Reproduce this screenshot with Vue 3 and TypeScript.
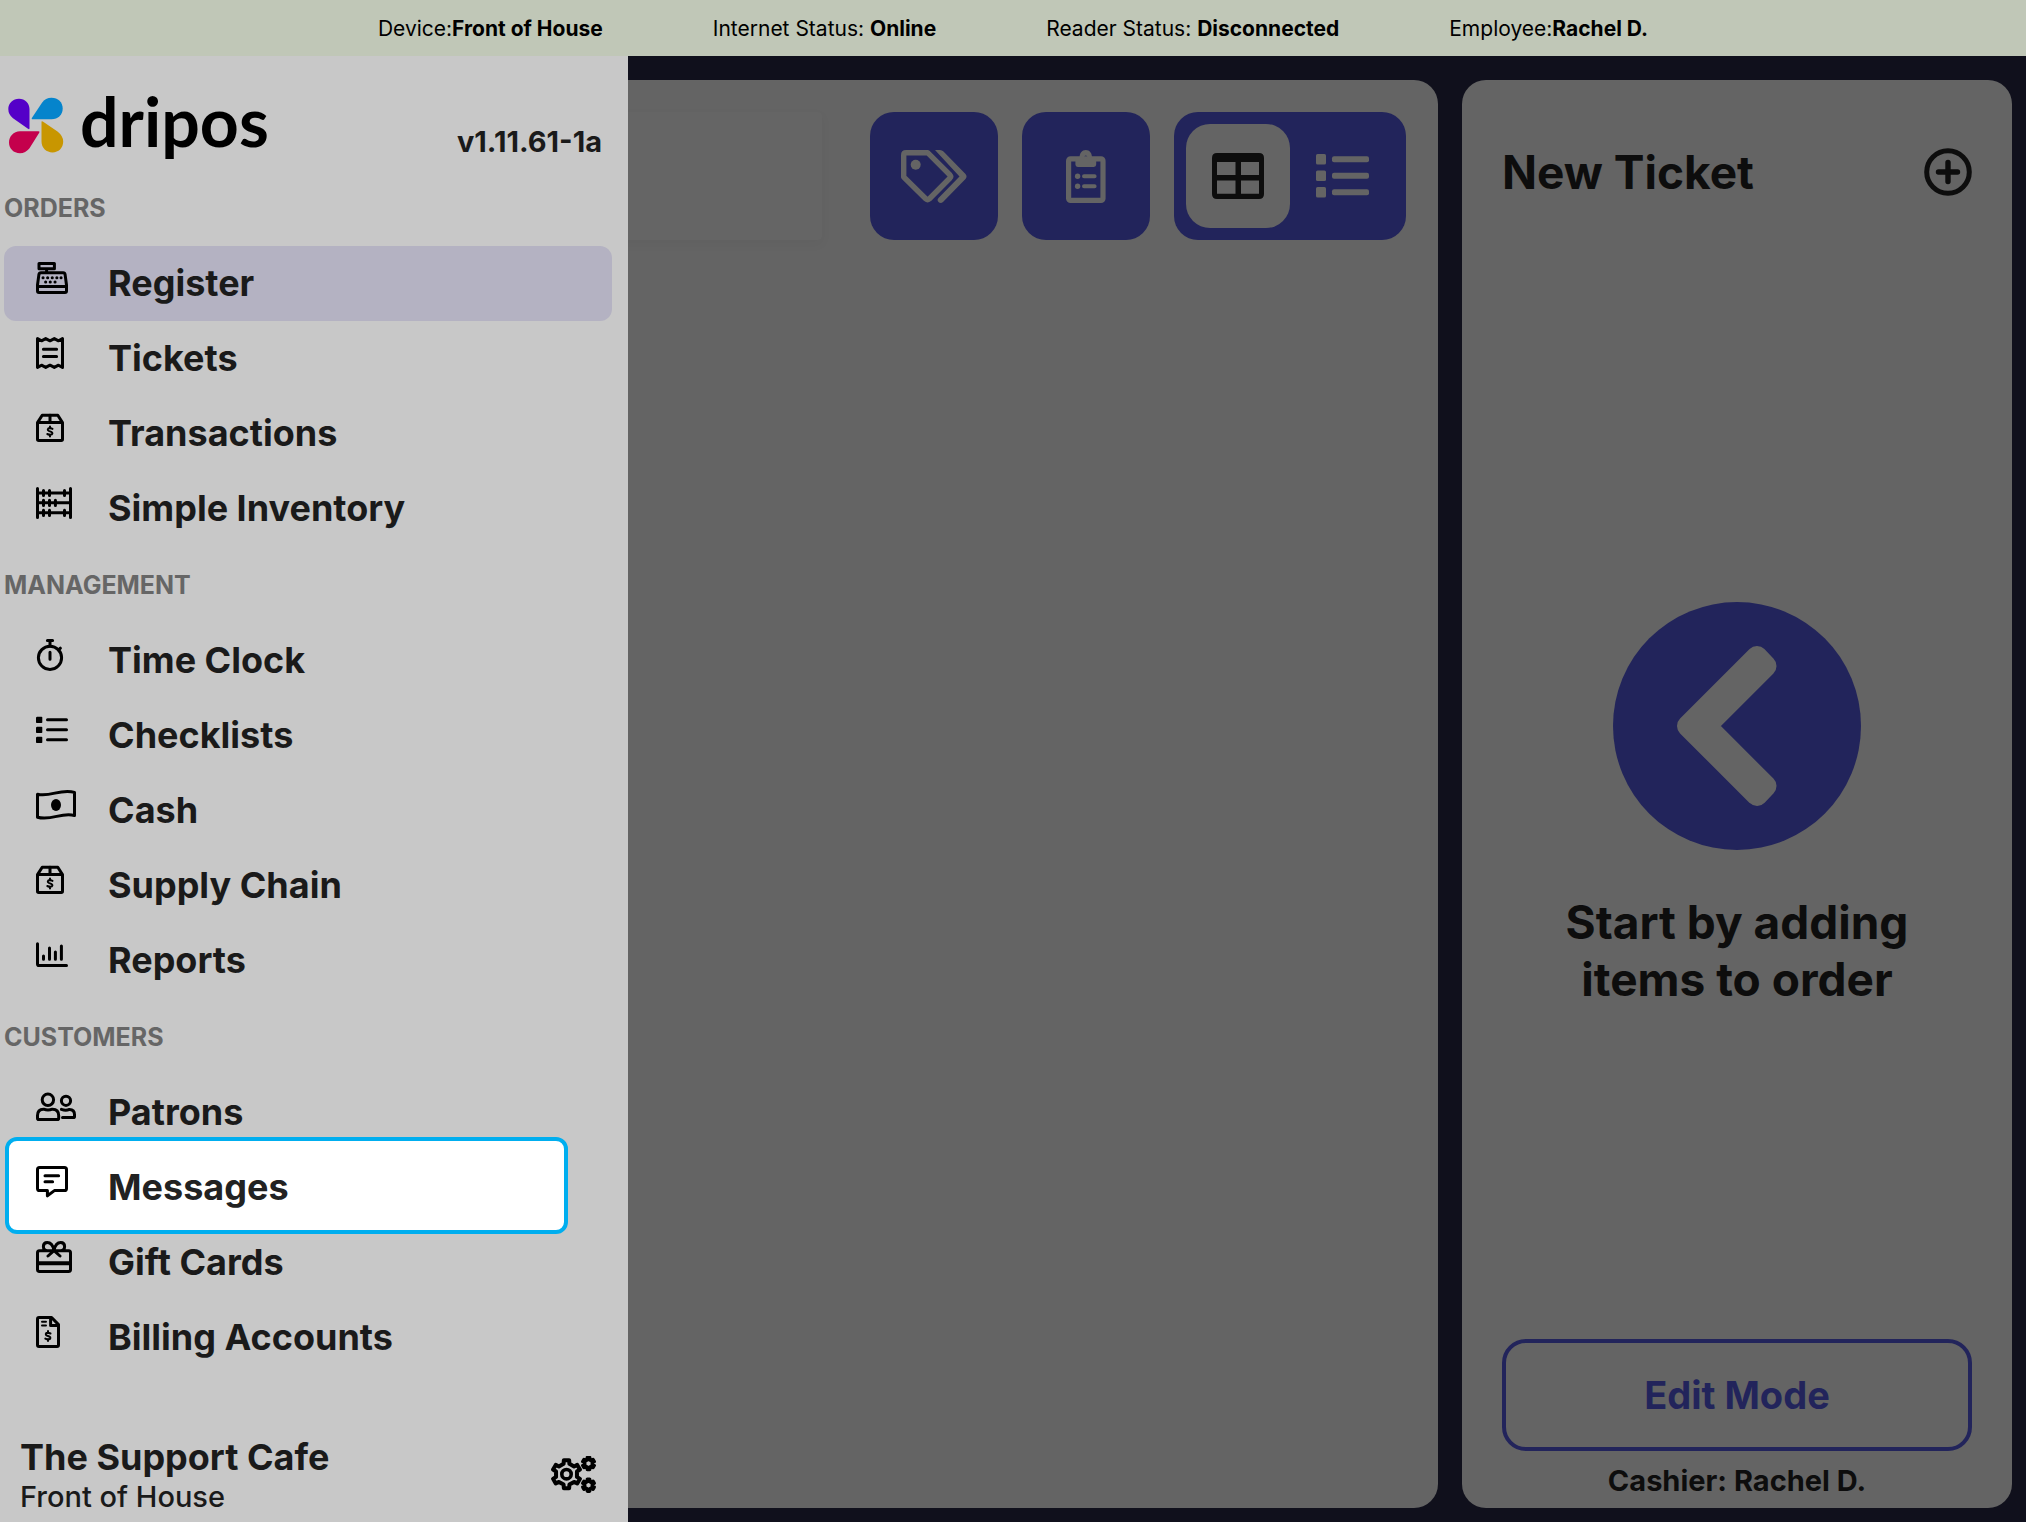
<script setup lang="ts">
import { ref } from 'vue'

interface Icon {
  width: number
  body: string
}

interface NavItem {
  label: string
  icon: string
}

interface NavSection {
  title: string
  items: NavItem[]
}

const dollar = (cx: number, cy: number): string =>
  `<path class="thin" d="M${cx + 2.5} ${cy - 2.5}Q${cx} ${cy - 3.8} ${cx - 1.6} ${cy - 3}Q${cx - 3.4} ${cy - 1} ${cx} ${cy}Q${cx + 3.6} ${cy + 1} ${cx + 1.8} ${cy + 3}Q${cx} ${cy + 3.9} ${cx - 2.7} ${cy + 2.6}M${cx} ${cy - 5}V${cy - 3}M${cx} ${cy + 3}V${cy + 5}"/>`

const icons: Record<string, Icon> = {
  register: {
    width: 32,
    body: '<path d="M3 1.5H18.4V6.8H3ZM10.6 7V10.5M5 10.8H27.2Q28.8 10.8 29.1 12.6L30.5 23V29Q30.5 30.5 29 30.5H3Q1.5 30.5 1.5 29V23L2.9 12.6Q3.2 10.8 5 10.8ZM1.5 24.4H30.5"/><path d="M7 15.8H7.1M11.6 15.8H11.7M16.2 15.8H16.3M20.8 15.8H20.9M25 15.8H25.1M9.6 20H9.7M14.2 20H14.3M19 20H19.1"/>',
  },
  receipt: {
    width: 28,
    body: '<path d="M1.5 1.6L5.5 3.8L9.7 1.6L14 3.8L18.3 1.6L22.5 3.8L26.5 1.6V30.4L22.5 28.2L18.3 30.4L14 28.2L9.7 30.4L5.5 28.2L1.5 30.4ZM7.4 12.3H20.6M7.4 19.5H20.6"/>',
  },
  box: {
    width: 28,
    body: `<path d="M6.2 3.3H21.8L26.5 10.6V27.3Q26.5 28.5 25.3 28.5H2.7Q1.5 28.5 1.5 27.3V10.6ZM1.5 10.4H26.5M14 3V10"/>${dollar(14, 19.4)}`,
  },
  abacus: {
    width: 36,
    body: '<path d="M1.5 1.5V30.5M34.5 1.5V30.5M1.5 6H34.5M1.5 15.8H34.5M1.5 25.8H34.5M7.5 3.4V8.6M13.5 3.4V8.6M28.5 3.4V8.6M7.5 13.2V18.4M13.5 13.2V18.4M19.4 13.2V18.4M7.5 23.2V28.4M13.5 23.2V28.4M28.5 23.2V28.4"/>',
  },
  stopwatch: {
    width: 28,
    body: '<circle cx="14" cy="18.8" r="11.6"/><path d="M11.4 1.6H16.6M14 2V7M14 13.2V20.3M22.5 11L24.4 9.2"/>',
  },
  list: {
    width: 32,
    body: '<path d="M11.5 5.8H30.5M11.5 15.8H30.5M11.5 25.8H30.5"/><path class="solid" d="M1 2.7H5.5Q6.3 2.7 6.3 3.5V8.2Q6.3 9 5.5 9H.8Q0 9 0 8.2V3.5ZM1 12.7H5.5Q6.3 12.7 6.3 13.5V18.2Q6.3 19 5.5 19H.8Q0 19 0 18.2V13.5ZM1 22.7H5.5Q6.3 22.7 6.3 23.5V28.2Q6.3 29 5.5 29H.8Q0 29 0 28.2V23.5Z"/>',
  },
  cash: {
    width: 40,
    body: '<path d="M1.5 5.2C14 8.6 25-1 38.5 3.4V26.6C26 22.8 15 32.2 1.5 28.2Z"/><ellipse class="solid" cx="20" cy="16" rx="5" ry="6"/>',
  },
  chart: {
    width: 32,
    body: '<path d="M1.5 4.8V25Q1.5 26.6 3 26.6H30.5M7.5 17V20.3M13.5 9V20.3M19.4 13V20.3M25.4 7V20.3"/>',
  },
  people: {
    width: 40,
    body: '<circle cx="11.9" cy="8.8" r="5.7"/><circle cx="30" cy="9.8" r="4.6"/><path d="M7.6 18.2Q12 20 16.4 18.2Q22.7 18.4 22.7 24.5V27.3Q22.7 28.6 21.4 28.6H2.8Q1.5 28.6 1.5 27.3V24.5Q1.5 18.4 7.6 18.2ZM25.4 18.4Q30 20 33.4 18.4Q38.5 18.6 38.5 23.4V25.4Q38.5 26.6 37.3 26.6H26.5"/>',
  },
  message: {
    width: 32,
    body: '<path d="M3.6 1.5H28.4Q30.5 1.5 30.5 3.6V22.4Q30.5 24.6 28.4 24.6H18.4L11.4 29.8V24.6H3.6Q1.5 24.6 1.5 22.4V3.6Q1.5 1.5 3.6 1.5ZM9 9.7H22.6M9 15.8H16.6"/>',
  },
  gift: {
    width: 36,
    body: '<path d="M3.4 9.7H32.6Q34.5 9.7 34.5 11.7V28.6Q34.5 30.5 32.6 30.5H3.4Q1.5 30.5 1.5 28.6V11.7Q1.5 9.7 3.4 9.7ZM18 9.4C17 4.4 14.6 1.5 11.3 1.5C8.8 1.5 7.4 3.2 7.4 5.5C7.4 8 9 9.7 11.5 9.7M18 9.4C19 4.4 21.4 1.5 24.7 1.5C27.2 1.5 28.6 3.2 28.6 5.5C28.6 8 27 9.7 24.5 9.7M12 15L18 9.7L24 15M2 21.7H34M2 22.7H34"/>',
  },
  invoice: {
    width: 24,
    body: `<path d="M3 1.5H15.6L22.5 8.6V29Q22.5 30.5 21 30.5H3Q1.5 30.5 1.5 29V3Q1.5 1.5 3 1.5ZM14.6 2V9.4H22"/><path class="thin" d="M6 5.8H10M6 9.6H10"/>${dollar(12, 20)}`,
  },
}

const sections: NavSection[] = [
  {
    title: 'ORDERS',
    items: [
      { label: 'Register', icon: 'register' },
      { label: 'Tickets', icon: 'receipt' },
      { label: 'Transactions', icon: 'box' },
      { label: 'Simple Inventory', icon: 'abacus' },
    ],
  },
  {
    title: 'MANAGEMENT',
    items: [
      { label: 'Time Clock', icon: 'stopwatch' },
      { label: 'Checklists', icon: 'list' },
      { label: 'Cash', icon: 'cash' },
      { label: 'Supply Chain', icon: 'box' },
      { label: 'Reports', icon: 'chart' },
    ],
  },
  {
    title: 'CUSTOMERS',
    items: [
      { label: 'Patrons', icon: 'people' },
      { label: 'Messages', icon: 'message' },
      { label: 'Gift Cards', icon: 'gift' },
      { label: 'Billing Accounts', icon: 'invoice' },
    ],
  },
]

const statuses = [
  { name: 'Device:', value: 'Front of House' },
  { name: 'Internet Status: ', value: 'Online' },
  { name: 'Reader Status: ', value: 'Disconnected' },
  { name: 'Employee:', value: 'Rachel D.' },
]

const active = ref('Register')
const spotlight = ref('Messages')
const view = ref<'grid' | 'list'>('grid')
const query = ref('')

// Closed outline of a six-toothed cog wheel, first tooth pointing up.
function gear(cx: number, cy: number, outer: number, inner: number): string {
  const step = Math.PI / 3
  const points: string[] = []
  for (let i = 0; i < 6; i++) {
    const a = i * step - Math.PI / 2
    for (const [offset, r] of [[-0.26, inner], [-0.18, outer], [0.18, outer], [0.26, inner]]) {
      const t = a + offset * step
      points.push(`${(cx + Math.cos(t) * r).toFixed(2)} ${(cy + Math.sin(t) * r).toFixed(2)}`)
    }
  }
  return `M${points.join('L')}Z`
}
</script>

<template>
  <div class="shell">
    <header class="status">
      <span v-for="s in statuses" :key="s.name" class="status-item">{{ s.name }}<b>{{ s.value }}</b></span>
    </header>

    <div class="stage">
      <div class="workspace">
        <main class="catalog">
          <div class="toolbar">
            <input v-model="query" class="search" type="search" aria-label="Search" />
            <button class="tool" type="button" aria-label="Discounts">
              <svg width="66" height="53" viewBox="0 0 66 53">
                <path d="M2.7 5Q2.7 2.7 5 2.7H26.6L49 25Q50.4 26.5 49 28L28.2 49Q26.6 50.4 25 49L2.7 27Z" fill="none" stroke="currentColor" stroke-width="5.4" stroke-linejoin="round" />
                <circle cx="14.7" cy="14.7" r="5" fill="currentColor" />
                <path d="M34 0H39Q41 0 42.5 1.5L64.5 24Q66.6 26.5 64.5 29L42 52Q39.6 54 37.5 52Q35.6 50 37.5 48L58.5 26.5Z" fill="currentColor" />
              </svg>
            </button>
            <button class="tool" type="button" aria-label="Checklist">
              <svg width="40" height="53" viewBox="0 0 40 53">
                <rect x="2.6" y="8.8" width="34.4" height="41.6" rx="2" fill="none" stroke="currentColor" stroke-width="5.2" />
                <path fill="currentColor" fill-rule="evenodd" d="M9.4 8H13.6C13.4 3 16 0 19.8 0S26.2 3 26 8H30.2V14.6Q30.2 17 27.8 17H11.8Q9.4 17 9.4 14.6ZM19.8 5.6A1.5 1.5 0 1 0 19.8 8.6A1.5 1.5 0 1 0 19.8 5.6Z" />
                <path d="M18 26.3H28.6M18 36.2H28.6" stroke="currentColor" stroke-width="4" stroke-linecap="round" />
                <circle cx="11.6" cy="26.3" r="2.7" fill="currentColor" />
                <circle cx="11.6" cy="36.2" r="2.7" fill="currentColor" />
              </svg>
            </button>
            <div class="toggle" role="group" aria-label="View">
              <button type="button" :class="['toggle-option', { on: view === 'grid' }]" aria-label="Grid view" @click="view = 'grid'">
                <svg width="52" height="46" viewBox="0 0 52 46">
                  <path fill="currentColor" fill-rule="evenodd" d="M5 0H47Q52 0 52 5V41Q52 46 47 46H5Q0 46 0 41V5Q0 0 5 0ZM5 9V22H23.5V9ZM29 9V22H47V9ZM5 27.5V40.7H23.5V27.5ZM29 27.5V40.7H47V27.5Z" />
                </svg>
              </button>
              <button type="button" :class="['toggle-option', { on: view === 'list' }]" aria-label="List view" @click="view = 'list'">
                <svg width="53" height="44" viewBox="0 0 53 44" fill="currentColor">
                  <rect width="10" height="10.5" rx="1.5" />
                  <rect y="16.5" width="10" height="10.5" rx="1.5" />
                  <rect y="33" width="10" height="10.5" rx="1.5" />
                  <rect x="16" y="2.3" width="37" height="6" rx="2" />
                  <rect x="16" y="18.8" width="37" height="6" rx="2" />
                  <rect x="16" y="35.2" width="37" height="6" rx="2" />
                </svg>
              </button>
            </div>
          </div>
        </main>

        <section class="ticket">
          <div class="ticket-head">
            <h1>New Ticket</h1>
            <button class="plain" type="button" aria-label="Add ticket">
              <svg width="48" height="48" viewBox="0 0 48 48" fill="none" stroke="currentColor" stroke-linecap="round">
                <circle cx="24" cy="24" r="21.3" stroke-width="5" />
                <path d="M14.5 24H33.5M24 14.5V33.5" stroke-width="5.4" />
              </svg>
            </button>
          </div>
          <div class="empty">
            <svg width="248" height="248" viewBox="0 0 248 248">
              <circle cx="124" cy="124" r="124" fill="#22245b" />
              <path d="M74.5 124L144 54.5L153 64L93 124L153 184L144 193.5Z" fill="#646464" stroke="#646464" stroke-width="21" stroke-linejoin="round" />
            </svg>
            <p>Start by adding<br />items to order</p>
          </div>
          <button class="edit" type="button">Edit Mode</button>
          <p class="cashier">Cashier: Rachel D.</p>
        </section>
      </div>

      <aside class="drawer">
        <div class="brand-row">
          <div class="brand">
            <svg width="56" height="57" viewBox="0 0 56 57">
              <path fill="#5400c8" d="M21.5 31Q21.5 33 20 31.8L5 21.2Q.3 17.5 .3 12C.3 6 5 1.7 11 1.7S21.5 6 21.5 12Z" />
              <path fill="#0584cc" d="M25 22.3Q23 22.3 24 20.7L34 5.8Q37.5 .8 43.5 .8C50 .8 54.7 5.3 54.7 11.5S50 22.3 43.5 22.3Z" />
              <path fill="#c4004c" d="M30.5 34.2Q32.3 34.2 31.2 35.8L21.5 51.2Q17.5 56.2 12 56.2C5.5 56.2 1 51.5 1 45.5S5.5 34.2 12 34.2Z" />
              <path fill="#c89600" d="M33.5 25Q33.5 23.5 34.8 24.6L49.5 34.5Q55.2 39 55.2 44.5C55.2 51 50.5 55.4 44.5 55.4S33.5 51 33.5 44.5Z" />
            </svg>
            <span class="wordmark">dripos</span>
          </div>
          <span class="version">v1.11.61-1a</span>
        </div>

        <nav>
          <section v-for="section in sections" :key="section.title">
            <h2>{{ section.title }}</h2>
            <a
              v-for="item in section.items"
              :key="item.label"
              href="#"
              :class="['nav-item', { active: item.label === active, spotlight: item.label === spotlight }]"
              @click.prevent="active = item.label"
            >
              <span class="nav-icon">
                <svg :width="icons[item.icon].width" height="32" :viewBox="`0 0 ${icons[item.icon].width} 32`" v-html="icons[item.icon].body"></svg>
              </span>
              <span>{{ item.label }}</span>
            </a>
          </section>
        </nav>

        <footer class="account">
          <div>
            <p class="shop">The Support Cafe</p>
            <p class="device">Front of House</p>
          </div>
          <button class="plain" type="button" aria-label="Settings">
            <svg width="46" height="37" viewBox="0 0 46 37" fill="none" stroke="currentColor" stroke-linejoin="round">
              <path :d="gear(15.5, 18.2, 14.2, 10.8)" stroke-width="4" />
              <circle cx="15.5" cy="18.2" r="4.7" stroke-width="3.6" />
              <path :d="gear(37.5, 7.5, 6, 4)" stroke-width="3.6" />
              <path :d="gear(37.5, 29.2, 6, 4)" stroke-width="3.6" />
            </svg>
          </button>
        </footer>
      </aside>
    </div>
  </div>
</template>

<style>
body {
  margin: 0;
  background: #10101c;
}
</style>

<style scoped>
.shell {
  display: flex;
  flex-direction: column;
  min-height: 100vh;
  font-family: Inter, "Liberation Sans", sans-serif;
  color: #1a1a1a;
}

p,
h1,
h2 {
  margin: 0;
}

button {
  padding: 0;
  border: 0;
  font: inherit;
  color: inherit;
  background: none;
  cursor: pointer;
}

svg {
  display: block;
  flex: none;
}

.status {
  display: flex;
  justify-content: center;
  align-items: center;
  gap: 110px;
  height: 56px;
  padding-top: 2px;
  box-sizing: border-box;
  background: #c0c7b7;
  color: #000;
  font-size: 21px;
  line-height: 24px;
}

.status-item {
  white-space: pre;
}

.status b {
  font-weight: 700;
}

.stage {
  flex: 1;
  display: grid;
}

.workspace,
.drawer {
  grid-area: 1 / 1;
}

.workspace {
  display: flex;
  gap: 24px;
  padding: 24px 14px 14px;
  background: #10101c;
}

.catalog,
.ticket {
  border-radius: 24px;
  background: #646464;
  box-sizing: border-box;
}

.catalog {
  flex: 1;
  padding: 32px;
}

.toolbar {
  display: flex;
  gap: 24px;
}

.search {
  flex: 1;
  min-width: 0;
  height: 128px;
  margin-right: 24px;
  padding: 0 32px;
  box-sizing: border-box;
  border: 0;
  border-radius: 4px;
  outline: 0;
  background: #656565;
  font: inherit;
  box-shadow: 0 4px 12px rgba(0, 0, 0, 0.04);
}

.tool,
.toggle-option {
  display: flex;
  align-items: center;
  justify-content: center;
  border-radius: 24px;
  color: #646464;
}

.tool {
  width: 128px;
  height: 128px;
  background: #22245b;
}

.toggle {
  display: flex;
  padding: 12px;
  border-radius: 24px;
  background: #22245b;
}

.toggle-option {
  width: 104px;
  height: 104px;
}

.toggle-option.on {
  background: #646464;
  color: #0d0d0d;
}

.ticket {
  display: flex;
  flex-direction: column;
  width: 550px;
  padding: 64px 40px 9px;
  color: #0d0d0d;
}

.ticket-head {
  display: flex;
  align-items: center;
  justify-content: space-between;
  height: 56px;
}

h1 {
  font-size: 46px;
  line-height: 58px;
  font-weight: 700;
}

.empty {
  flex: 1;
  display: flex;
  flex-direction: column;
  align-items: center;
  justify-content: center;
  gap: 44px;
  padding-top: 70px;
  text-align: center;
  font-size: 46px;
  line-height: 57px;
  font-weight: 700;
}

.edit {
  height: 112px;
  border: 4px solid #22245b;
  border-radius: 24px;
  color: #22245b;
  font-size: 38px;
  font-weight: 700;
}

.cashier {
  margin-top: 12px;
  text-align: center;
  font-size: 29px;
  line-height: 36px;
  font-weight: 700;
}

.drawer {
  z-index: 1;
  display: flex;
  flex-direction: column;
  width: 628px;
  background: #c8c8c8;
}

.brand-row {
  display: flex;
  align-items: flex-end;
  justify-content: space-between;
  height: 113px;
  padding: 0 26px 12px 8px;
  box-sizing: border-box;
}

.brand {
  display: flex;
  align-items: flex-start;
  gap: 16px;
  margin-bottom: 3px;
}

.wordmark {
  color: #000;
  font-family: Lato, "Open Sans", sans-serif;
  font-size: 68px;
  line-height: 48px;
  font-weight: 700;
}

.version {
  font-size: 29px;
  line-height: 30px;
  font-weight: 700;
}

h2 {
  height: 77px;
  padding: 27px 4px 0;
  box-sizing: border-box;
  color: #666;
  font-size: 25px;
  line-height: 24px;
  font-weight: 700;
}

.nav-item {
  position: relative;
  z-index: 0;
  display: flex;
  height: 75px;
  margin: 0 16px 0 4px;
  padding-left: 32px;
  border-radius: 12px;
  color: inherit;
  font-size: 36px;
  line-height: 75px;
  font-weight: 700;
  text-decoration: none;
}

.nav-item.active {
  background: #b4b2c2;
}

.nav-item.spotlight {
  z-index: 1;
  color: #222;
}

.nav-item.spotlight::before {
  content: "";
  position: absolute;
  z-index: -1;
  inset: -13px 44px -9px 1px;
  border: 4px solid #00aeef;
  border-radius: 12px;
  background: #fff;
}

.nav-icon {
  width: 72px;
  padding-top: 16px;
  box-sizing: border-box;
  color: #000;
}

.nav-icon svg {
  fill: none;
  stroke: currentColor;
  stroke-width: 3px;
  stroke-linecap: round;
  stroke-linejoin: round;
}

.nav-icon :deep(.solid) {
  fill: currentColor;
  stroke: none;
}

.nav-icon :deep(.thin) {
  stroke-width: 2px;
}

.plain {
  display: block;
}

.account {
  display: flex;
  align-items: center;
  justify-content: space-between;
  margin-top: auto;
  padding: 0 31px 5px 20px;
}

.account .plain {
  padding-bottom: 6px;
  color: #000;
}

.shop {
  font-size: 36px;
  line-height: 40px;
  font-weight: 700;
}

.device {
  font-size: 29px;
  line-height: 40px;
  font-weight: 500;
}
</style>
